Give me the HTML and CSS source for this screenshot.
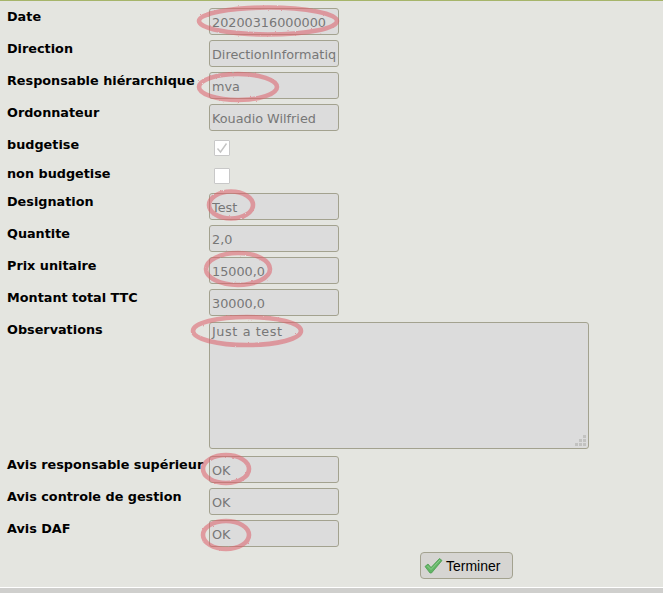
FILE: index.html
```html
<!DOCTYPE html>
<html>
<head>
    <meta charset="UTF-8">
    <title>Demande</title>
    <link rel="stylesheet" href="styles.css">
</head>
<body>
<div class="page">
    <form class="form">
        <div class="row"><label>Date</label><input class="field" type="text" readonly value="20200316000000"></div>
        <div class="row"><label>Direction</label><input class="field" type="text" readonly value="DirectionInformatique"></div>
        <div class="row"><label>Responsable hiérarchique</label><input class="field" type="text" readonly value="mva"></div>
        <div class="row"><label>Ordonnateur</label><input class="field" type="text" readonly value="Kouadio Wilfried"></div>
        <div class="row row_check"><label>budgetise</label>
            <span class="check">
                <svg width="14" height="14" viewBox="0 0 14 14"><path d="M2.5 7.5 L5.5 11 L11.5 2.5" fill="none" stroke="#c4c4c4" stroke-width="1.4"/></svg>
            </span>
        </div>
        <div class="row row_check"><label>non budgetise</label><span class="check"></span></div>
        <div class="row"><label>Designation</label><input class="field" type="text" readonly value="Test"></div>
        <div class="row"><label>Quantite</label><input class="field" type="text" readonly value="2,0"></div>
        <div class="row"><label>Prix unitaire</label><input class="field" type="text" readonly value="15000,0"></div>
        <div class="row"><label>Montant total TTC</label><input class="field" type="text" readonly value="30000,0"></div>
        <div class="row row_area"><label>Observations</label>
            <div class="area_box">
                <textarea class="area" readonly>Just a test</textarea>
                <!-- poignee de redimensionnement -->
                <svg class="grip" width="12" height="12" viewBox="0 0 12 12" fill="#c2c2c0">
                    <rect x="8" y="0" width="3" height="3"/>
                    <rect x="4" y="4" width="3" height="3"/><rect x="8" y="4" width="3" height="3"/>
                    <rect x="0" y="8" width="3" height="3"/><rect x="4" y="8" width="3" height="3"/><rect x="8" y="8" width="3" height="3"/>
                </svg>
            </div>
        </div>
        <div class="row"><label>Avis responsable supérieur</label><input class="field" type="text" readonly value="OK"></div>
        <div class="row"><label>Avis controle de gestion</label><input class="field" type="text" readonly value="OK"></div>
        <div class="row"><label>Avis DAF</label><input class="field" type="text" readonly value="OK"></div>
        <div class="actions">
            <button type="button" class="btn">
                <svg width="19" height="17" viewBox="0 0 19 17">
                    <path d="M1 9.5 L4 7 L7 10.5 L15.5 1.5 L18 3.5 L7.5 16 L6 16 Z" fill="#62b565" stroke="#4c9c50" stroke-width="0.8" stroke-linejoin="round"/>
                    <path d="M3.5 9 L7 12.5 L16 3" fill="none" stroke="#8fd08f" stroke-width="1"/>
                </svg>
                Terminer
            </button>
        </div>
    </form>

    <!-- annotations rouges dessinees sur la capture -->
    <svg class="marks" width="663" height="593" viewBox="0 0 663 593">
        <defs>
            <filter id="rough"><feTurbulence type="fractalNoise" baseFrequency="0.4" numOctaves="2" seed="4"/><feDisplacementMap in="SourceGraphic" scale="2"/><feGaussianBlur stdDeviation="0.4"/></filter>
        </defs>
        <g fill="none" stroke="#dd5f6a" stroke-opacity="0.55" stroke-width="4.6" filter="url(#rough)">
            <ellipse cx="268" cy="21" rx="69" ry="13.5"/>
            <ellipse cx="238" cy="87" rx="39" ry="13"/>
            <ellipse cx="231" cy="205" rx="22" ry="13.5"/>
            <ellipse cx="238" cy="269" rx="32" ry="16"/>
            <ellipse cx="247" cy="331" rx="54" ry="14"/>
            <ellipse cx="226" cy="469" rx="23" ry="14"/>
            <ellipse cx="226" cy="535" rx="23" ry="14"/>
        </g>
    </svg>
</div>
</body>
</html>
```

FILE: styles.css
```css
html, body {
    margin: 0;
    padding: 0;
}
body {
    background: #cfcfcd;
    font-family: "DejaVu Sans", Verdana, sans-serif;
    font-size: 12.8px;
    overflow: hidden;
}
.page {
    position: relative;
    height: 593px;
}
.form {
    background: #e4e5e0;
    border-top: 1px solid #a6b56a;
    border-bottom: 1px solid #fff;
    padding: 7px 0 0 7px;
    height: 579px;
}
.row {
    display: grid;
    grid-template-columns: 202px auto;
    justify-items: start;
    margin-bottom: 5px;
}
.row label {
    font-weight: bold;
    color: #000;
    line-height: 17px;
    white-space: nowrap;
}
.row_check {
    height: 24px;
}
.row_check + .row_check {
    height: 23px;
}
.row_area {
    margin-top: 6px;
    margin-bottom: 7px;
}
.row_area label {
    margin-top: -1px;
}
.field, .area {
    background: #dcdcdc;
    border: 1px solid #a3a28f;
    border-radius: 3px;
    color: #777;
    font-family: "DejaVu Sans", Verdana, sans-serif;
    font-size: 12.8px;
    padding: 4px 2px 2px;
    box-sizing: border-box;
    outline: none;
}
.field {
    width: 130px;
    height: 27px;
}
.area_box {
    position: relative;
    width: 380px;
    height: 127px;
}
.area {
    display: block;
    width: 100%;
    height: 100%;
    padding-top: 1px;
    letter-spacing: 0.6px;
    resize: none;
}
.grip {
    position: absolute;
    right: 2px;
    bottom: 2px;
}
.check {
    display: flex;
    align-items: center;
    justify-content: center;
    width: 14px;
    height: 14px;
    margin: 4px 0 0 5px;
    background: #fff;
    border: 1px solid #c8c8c8;
    border-radius: 1px;
}
.row_check + .row_check .check {
    margin-top: 3px;
}
.actions {
    display: flex;
    padding: 0 0 0 413px;
}
.btn {
    display: flex;
    align-items: center;
    gap: 3px;
    width: 93px;
    height: 27px;
    padding: 0 0 0 3px;
    background: #d6d5d2;
    border: 1px solid #a3a28f;
    border-radius: 4px;
    color: #000;
    font-family: "Liberation Sans", Arial, sans-serif;
    font-size: 14px;
}
.marks {
    position: absolute;
    left: 0;
    top: 0;
    pointer-events: none;
}
```
